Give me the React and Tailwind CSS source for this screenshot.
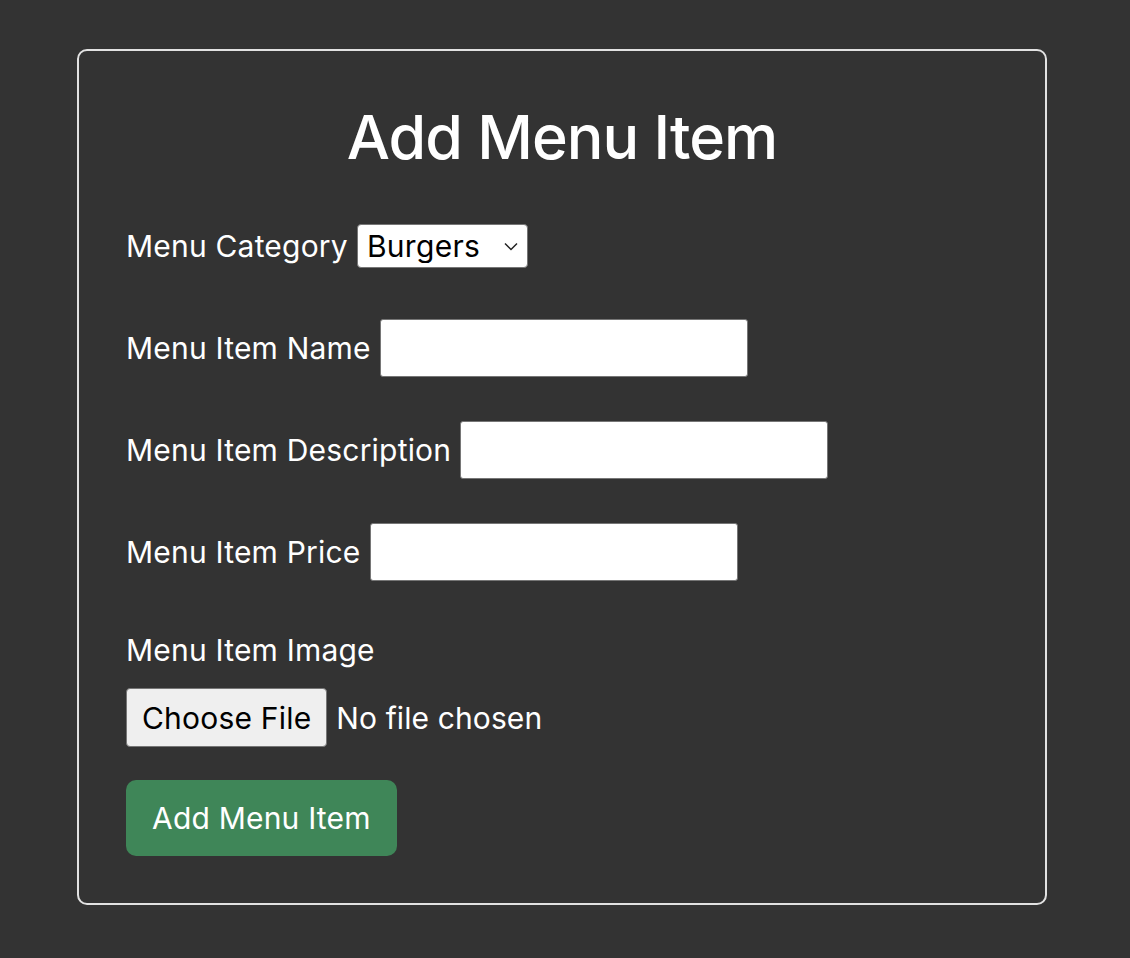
import React from 'react';

const fields = [
  { label: 'Menu Item Name' },
  { label: 'Menu Item Description' },
  { label: 'Menu Item Price' },
];

export default function App() {
  return (
    <div className="min-h-screen bg-[#333333] pt-[49px] pb-[53px] font-['Inter','Liberation_Sans',sans-serif] text-white">
      <form className="ml-[77px] w-[970px] border-2 border-[#e2e2e2] rounded-[10px] pt-[55px] pb-[47px] px-[47px]">
        <h1 className="text-center text-[61px] leading-[62px] font-medium tracking-[-1px]">Add Menu Item</h1>

        <div className="mt-[49px] flex flex-col gap-[44px]">
          {/* Category */}
          <div className="flex items-center gap-[9px] h-[58px]">
            <label className="text-[30px] leading-[34px] tracking-[0.2px]">Menu Category</label>
            <div className="relative">
              <select className="appearance-none w-[171px] h-[44px] bg-white text-black text-[30px] leading-[34px] tracking-[0.3px] border border-[#767676] rounded-[4px] pl-[9px] pr-[30px] outline-none font-['Inter','Liberation_Sans',sans-serif]">
                <option>Burgers</option>
                <option>Sides</option>
                <option>Drinks</option>
              </select>
              <svg className="absolute right-[10px] top-[18px] pointer-events-none" width="14" height="9" viewBox="0 0 14 9" fill="none">
                <path d="M1 1.5 L7 7.5 L13 1.5" stroke="#222" strokeWidth="1.5" />
              </svg>
            </div>
          </div>

          {fields.map(f => (
            <div key={f.label} className="flex items-center gap-[9px] h-[58px]">
              <label className="text-[30px] leading-[34px] tracking-[0.2px]">{f.label}</label>
              <input type="text" className="w-[368px] h-[58px] bg-white text-black text-[30px] border border-[#767676] rounded-[3px] px-2 outline-none" />
            </div>
          ))}
        </div>

        <div className="mt-[52px] text-[30px] leading-[34px] tracking-[0.2px]">Menu Item Image</div>
        <div className="mt-[21px] flex items-center">
          <button type="button" className="h-[59px] px-[15px] bg-[#efefef] text-black text-[30px] leading-[34px] tracking-[0.2px] border border-[#767676] rounded-[4px]">
            Choose File
          </button>
          <span className="ml-[9px] text-[30px] leading-[34px] tracking-[0.1px]">No file chosen</span>
        </div>

        <button type="submit" className="mt-[33px] h-[76px] px-[26px] bg-[#3f8658] text-white text-[30px] leading-[34px] tracking-[0.2px] rounded-[10px]">
          Add Menu Item
        </button>
      </form>
    </div>
  );
}
